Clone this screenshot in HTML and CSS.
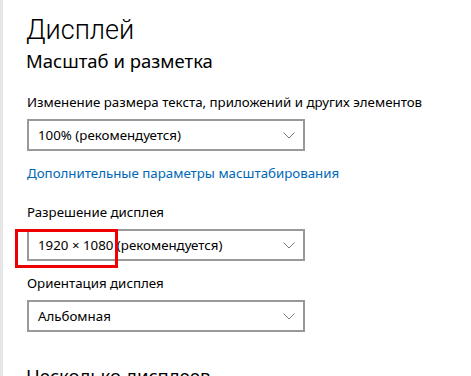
FILE: index.html
```html
<!DOCTYPE html>
<html lang="ru">
<head>
  <meta charset="UTF-8">
  <title>Дисплей</title>
  <link rel="stylesheet" href="styles.css">
</head>
<body>

  <div class="page">
    <h1 class="title">Дисплей</h1>
    <h2 class="subtitle">Масштаб и разметка</h2>

    <div class="label first">Изменение размера текста, приложений и других элементов</div>
    <div class="combo">
      <span>100% (рекомендуется)</span>
      <svg class="chevron" width="12" height="7" viewBox="0 0 12 7"><path d="M0.5 0.5 L6 6 L11.5 0.5" fill="none" stroke="#7a7a7a" stroke-width="1"/></svg>
    </div>

    <a class="link" href="#">Дополнительные параметры масштабирования</a>

    <div class="label">Разрешение дисплея</div>
    <div class="combo marked">
      <span>1920 × 1080 (рекомендуется)</span>
      <svg class="chevron" width="12" height="7" viewBox="0 0 12 7"><path d="M0.5 0.5 L6 6 L11.5 0.5" fill="none" stroke="#7a7a7a" stroke-width="1"/></svg>
      <div class="highlight"></div>
    </div>

    <div class="label small-gap">Ориентация дисплея</div>
    <div class="combo">
      <span>Альбомная</span>
      <svg class="chevron" width="12" height="7" viewBox="0 0 12 7"><path d="M0.5 0.5 L6 6 L11.5 0.5" fill="none" stroke="#7a7a7a" stroke-width="1"/></svg>
    </div>

    <h2 class="subtitle section">Несколько дисплеев</h2>
  </div>

</body>
</html>
```

FILE: styles.css
```css
html, body {
  margin: 0;
  height: 100%;
  overflow: hidden;
}
body {
  font-family: "Noto Sans", "Open Sans", sans-serif;
  background: #ffffff;
  color: #000000;
  border-left: 3px solid #e6e6e6;
  box-sizing: border-box;
}
.page {
  padding: 12px 0 0 24px;
  display: flex;
  flex-direction: column;
  align-items: flex-start;
}
.title {
  margin: 0 0 0 -1px;
  font-family: Roboto, "Noto Sans", sans-serif;
  font-size: 27px;
  font-weight: 300;
  line-height: 36px;
}
.subtitle {
  margin: 0 0 0 -1px;
  font-size: 18.5px;
  font-weight: 400;
  line-height: 26px;
}
.subtitle.section {
  margin-top: 31px;
}
.label {
  margin-top: 19px;
  font-size: 13.3px;
  line-height: 20px;
}
.label.first {
  margin-top: 18px;
}
.label.small-gap {
  margin-top: 12px;
}
.combo {
  position: relative;
  margin-top: 7px;
  width: 278px;
  height: 32px;
  border: 2px solid #999999;
  box-sizing: border-box;
  display: flex;
  align-items: center;
  justify-content: space-between;
  padding: 0 8px 0 9px;
  font-size: 13.3px;
}
.chevron {
  display: block;
}
.highlight {
  position: absolute;
  left: -14px;
  top: -2px;
  width: 103px;
  height: 39px;
  border: 3px solid #ee0000;
  box-sizing: border-box;
}
.link {
  margin-top: 12px;
  font-size: 13.3px;
  line-height: 20px;
  color: #0067b8;
  text-decoration: none;
}
```
